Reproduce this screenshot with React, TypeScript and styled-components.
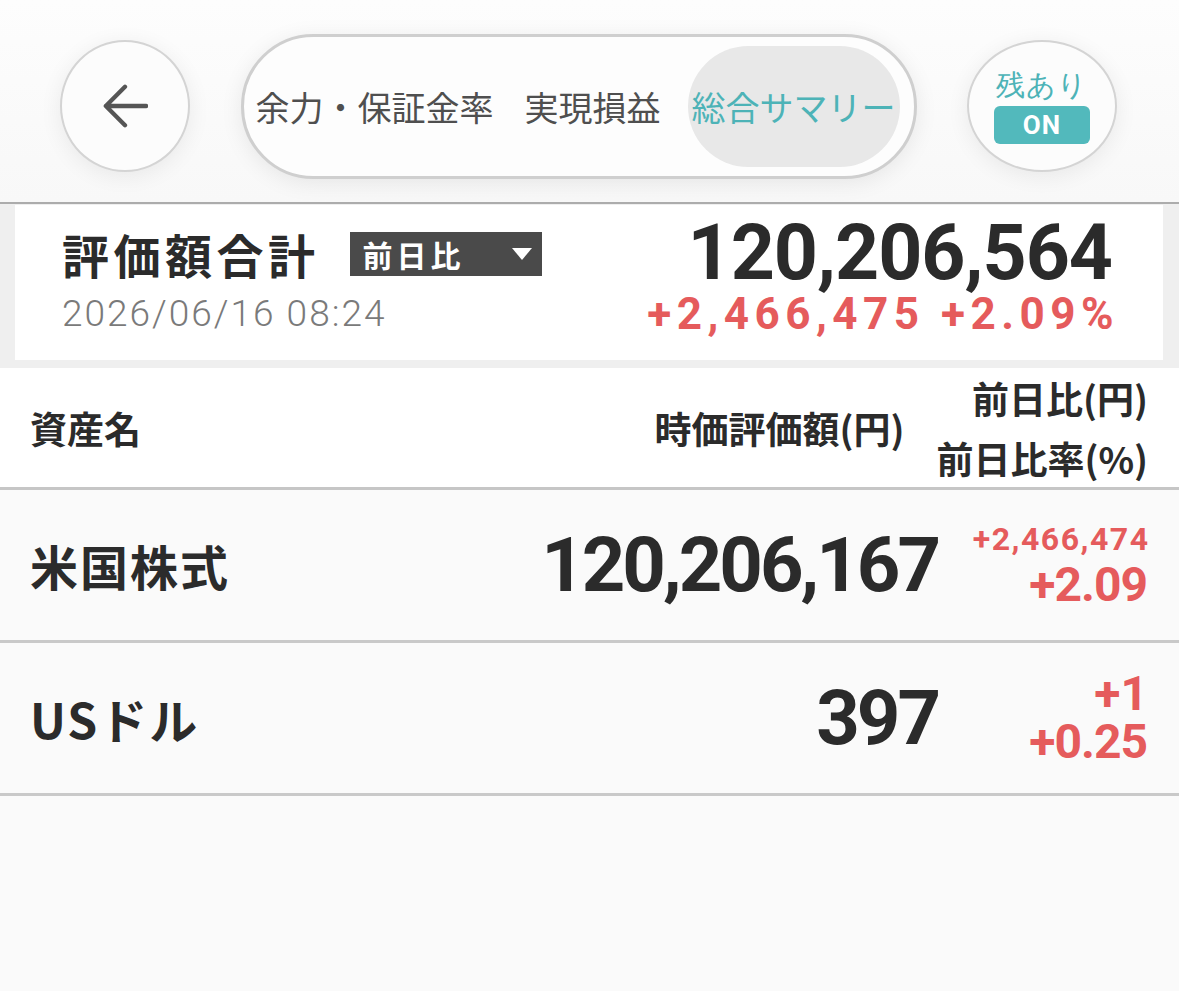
import React from 'react';
import styled, { createGlobalStyle } from 'styled-components';

const GlobalStyle = createGlobalStyle`
  html, body {
    margin: 0;
    padding: 0;
    background: #fafafa;
  }
  body {
    font-family: "Noto Sans CJK JP", "Noto Sans", sans-serif;
    color: #2b2b2b;
  }
`;

const NUM_FONT = `Roboto, "Noto Sans", sans-serif`;
const TEAL = '#4db3b7';
const RED = '#e55b5c';

const Page = styled.div`
  min-height: 991px;
  background: #fafafa;
`;

/* ---------- top navigation ---------- */

const NavBar = styled.header`
  display: flex;
  align-items: center;
  justify-content: space-between;
  box-sizing: border-box;
  height: 204px;
  padding: 10px 62px 0 60px;
  background: linear-gradient(#fdfdfd, #f8f8f8);
  border-bottom: 2px solid #acacac;
`;

const RoundButton = styled.button<{ $width: number }>`
  display: flex;
  flex-direction: column;
  align-items: center;
  justify-content: center;
  box-sizing: border-box;
  width: ${p => p.$width}px;
  height: 132px;
  padding: 0;
  border-radius: 50%;
  border: 2.5px solid #d4d4d4;
  background: #fcfcfc;
  box-shadow: 0 4px 22px rgba(0, 0, 0, 0.07);
  cursor: pointer;
`;

const TabPill = styled.nav`
  display: flex;
  align-items: center;
  gap: 23px;
  box-sizing: border-box;
  height: 145px;
  padding: 0 14px 0 8px;
  border-radius: 73px;
  border: 3px solid #cfcfcf;
  background: #fdfdfd;
  box-shadow: 0 4px 22px rgba(0, 0, 0, 0.08);
`;

const Tab = styled.span<{ $active?: boolean }>`
  display: flex;
  align-items: center;
  height: 121px;
  padding: 0 4px;
  border-radius: 61px;
  font-size: 34px;
  font-weight: 400;
  white-space: nowrap;
  color: ${p => (p.$active ? TEAL : '#4f4f4f')};
  background: ${p => (p.$active ? '#e8e8e8' : 'transparent')};
`;

const RemainLabel = styled.span`
  font-size: 29px;
  line-height: 34px;
  letter-spacing: 1px;
  color: ${TEAL};
`;

const OnBadge = styled.span`
  display: flex;
  align-items: center;
  justify-content: center;
  width: 96px;
  height: 38px;
  margin-top: 4px;
  border-radius: 6px;
  background: #52b9bc;
  color: #fff;
  font-family: ${NUM_FONT};
  font-size: 26px;
  font-weight: 700;
  letter-spacing: 1px;
`;

/* ---------- valuation summary ---------- */

const SummaryBand = styled.section`
  padding: 1px 16px 8px 15px;
  background: #efefef;
`;

const SummaryCard = styled.div`
  display: grid;
  grid-template-columns: 1fr auto;
  align-items: center;
  padding: 10px 50px 24px 47px;
  background: #fff;
`;

const TitleGroup = styled.div`
  display: flex;
  align-items: center;
  gap: 30px;
`;

const SummaryTitle = styled.h1`
  margin: 0;
  font-size: 47px;
  font-weight: 700;
  letter-spacing: 4.5px;
  line-height: 1;
`;

const CompareSelect = styled.div`
  display: flex;
  align-items: center;
  justify-content: space-between;
  box-sizing: border-box;
  width: 192px;
  height: 44px;
  padding: 0 10px 0 13px;
  background: #4a4a4a;
  color: #fff;
  font-size: 30px;
  font-weight: 700;
  letter-spacing: 4px;
`;

const DownCaret = styled.span`
  width: 0;
  height: 0;
  border-left: 10px solid transparent;
  border-right: 10px solid transparent;
  border-top: 12px solid #fff;
`;

const TotalValue = styled.div`
  font-family: ${NUM_FONT};
  font-size: 77px;
  font-weight: 700;
  line-height: 1;
  letter-spacing: -1px;
  margin-right: 1px;
  text-align: right;
`;

const Stamp = styled.div`
  font-family: ${NUM_FONT};
  font-size: 37px;
  font-weight: 300;
  line-height: 44px;
  letter-spacing: 2px;
  color: #7a7a7a;
`;

const TotalChange = styled.div`
  font-family: ${NUM_FONT};
  font-size: 44px;
  font-weight: 700;
  line-height: 44px;
  letter-spacing: 5.5px;
  margin-right: -6px;
  color: ${RED};
  text-align: right;
`;

/* ---------- asset table ---------- */

const TableHead = styled.div`
  display: flex;
  align-items: center;
  gap: 32px;
  height: 119px;
  padding: 0 31px 0 30px;
  background: #fff;
  border-bottom: 3px solid #c6c6c6;
  font-size: 37px;
  font-weight: 700;
`;

const HeadName = styled.span`
  flex: 1;
`;

const HeadStack = styled.div`
  display: flex;
  flex-direction: column;
  align-items: flex-end;
  line-height: 60px;
`;

const AssetRow = styled.div`
  display: grid;
  grid-template-columns: 1fr auto 180px;
  column-gap: 30px;
  align-items: center;
  height: 150px;
  padding: 0 31px 0 30px;
  border-bottom: 3px solid #c9c9c9;
  background: #fafafa;
`;

const AssetName = styled.span`
  font-size: 48px;
  font-weight: 700;
  letter-spacing: 2px;
`;

const AssetValue = styled.span`
  font-family: ${NUM_FONT};
  font-size: 76px;
  font-weight: 700;
  letter-spacing: -3px;
  text-align: right;
`;

const ChangeStack = styled.div`
  display: flex;
  flex-direction: column;
  align-items: flex-end;
  color: ${RED};
  font-family: ${NUM_FONT};
  font-weight: 700;
`;

const ChangeLine = styled.span<{ $size: number; $lh: number; $track?: number }>`
  font-size: ${p => p.$size}px;
  line-height: ${p => p.$lh}px;
  letter-spacing: ${p => p.$track ?? 0}px;
  margin-right: ${p => -(p.$track ?? 0)}px;
`;

const BackArrow = () => (
  <svg width="46" height="46" viewBox="0 0 48 48" fill="none">
    <path
      d="M24 4 L4 24 L24 44 M4 24 H46"
      stroke="#555"
      strokeWidth="4.5"
      strokeLinecap="round"
      strokeLinejoin="round"
    />
  </svg>
);

const tabs = ['余力・保証金率', '実現損益', '総合サマリー'];

export default function App() {
  return (
    <Page>
      <GlobalStyle />
      <NavBar>
        <RoundButton $width={130} aria-label="戻る">
          <BackArrow />
        </RoundButton>
        <TabPill>
          {tabs.map(t => (
            <Tab key={t} $active={t === '総合サマリー'}>
              {t}
            </Tab>
          ))}
        </TabPill>
        <RoundButton $width={150}>
          <RemainLabel>残あり</RemainLabel>
          <OnBadge>ON</OnBadge>
        </RoundButton>
      </NavBar>

      <SummaryBand>
        <SummaryCard>
          <TitleGroup>
            <SummaryTitle>評価額合計</SummaryTitle>
            <CompareSelect>
              前日比
              <DownCaret />
            </CompareSelect>
          </TitleGroup>
          <TotalValue>120,206,564</TotalValue>
          <Stamp>2026/06/16 08:24</Stamp>
          <TotalChange>+2,466,475 +2.09%</TotalChange>
        </SummaryCard>
      </SummaryBand>

      <TableHead>
        <HeadName>資産名</HeadName>
        <span>時価評価額(円)</span>
        <HeadStack>
          <span>前日比(円)</span>
          <span>前日比率(%)</span>
        </HeadStack>
      </TableHead>

      <AssetRow>
        <AssetName>米国株式</AssetName>
        <AssetValue>120,206,167</AssetValue>
        <ChangeStack>
          <ChangeLine $size={32} $lh={40} $track={1.5}>
            +2,466,474
          </ChangeLine>
          <ChangeLine $size={48} $lh={52} $track={-1}>
            +2.09
          </ChangeLine>
        </ChangeStack>
      </AssetRow>

      <AssetRow>
        <AssetName>USドル</AssetName>
        <AssetValue>397</AssetValue>
        <ChangeStack>
          <ChangeLine $size={48} $lh={48}>
            +1
          </ChangeLine>
          <ChangeLine $size={48} $lh={48} $track={-1}>
            +0.25
          </ChangeLine>
        </ChangeStack>
      </AssetRow>
    </Page>
  );
}
